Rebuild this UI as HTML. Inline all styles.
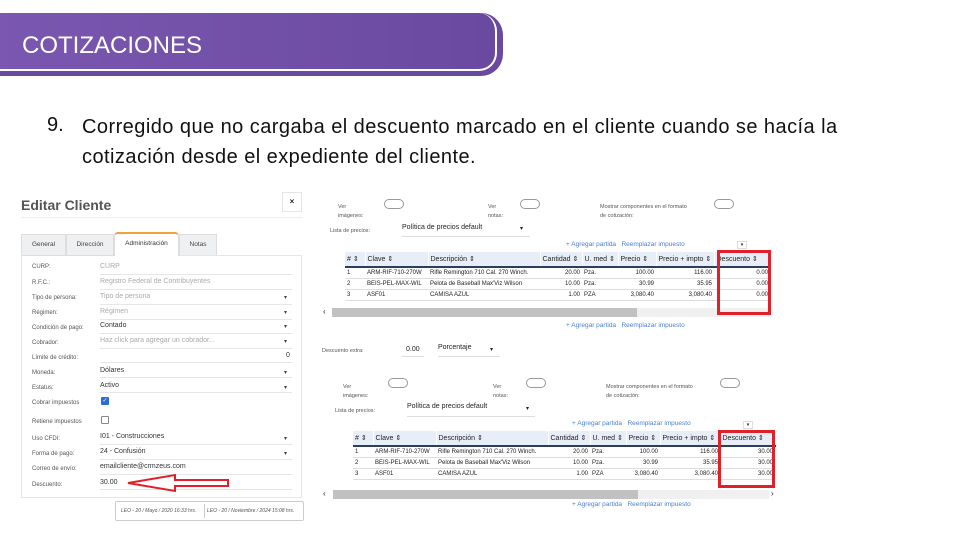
<!DOCTYPE html>
<html><head><meta charset="utf-8"><style>
*{margin:0;padding:0;box-sizing:border-box}
body{width:960px;height:540px;background:#fff;position:relative;overflow:hidden;font-family:"Liberation Sans",sans-serif;color:#222}
.a{position:absolute;white-space:nowrap}
.lbl{position:absolute;left:32px;font-size:6px;color:#555}
.val{position:absolute;left:100px;font-size:7px;color:#333}
.ph{color:#aaa}
.ln{position:absolute;left:100px;width:192px;height:1px;background:#e6e6e6}
.car{position:absolute;left:284px;font-size:6px;color:#444}
table{border-collapse:collapse;font-size:6px;position:absolute;table-layout:fixed;white-space:nowrap}
th{background:#e8eef7;font-weight:normal;text-align:left;padding:0 2px;height:15px;border-right:1px solid #fff;border-bottom:2px solid #2c3e60;color:#222;font-size:7px;overflow:hidden}
td{padding:0 2px;height:10.5px;border-bottom:1px solid #ddd;color:#222;overflow:hidden;line-height:10px}
td.r{text-align:right}
.red{position:absolute;border:3px solid #e0202a}
.tog{position:absolute;width:20px;height:10px;border:1px solid #999;border-radius:6px}
.sm{position:absolute;font-size:5.5px;color:#555;line-height:9px}
.blue{position:absolute;font-size:6.5px;color:#4a7fd0}
.sb{position:absolute;height:9px;background:#f0f0f0}
.sb div{height:100%;background:#c1c1c1}
</style></head><body>
<div class="a" style="left:0;top:13px;width:503px;height:63px;background:#6a4a9f;border-radius:0 22px 22px 0"></div>
<div class="a" style="left:-4px;top:13px;width:501px;height:58px;background:linear-gradient(90deg,#7a57b0,#6a4aa0);border:2px solid #fff;border-left:none;border-top:none;border-radius:0 18px 18px 0"></div>
<div class="a" style="left:22px;top:32px;font-size:24px;color:#fff">COTIZACIONES</div>
<div class="a" style="left:47px;top:114px;font-size:20px;color:#111">9.</div>
<div class="a" style="left:82px;top:112px;font-size:20px;color:#111;line-height:30px;letter-spacing:0.45px">Corregido que no cargaba el descuento marcado en el cliente cuando se hacía la<br>cotización desde el expediente del cliente.</div>
<div class="a" style="left:21px;top:197px;font-size:14px;font-weight:bold;color:#555">Editar Cliente</div>
<div class="a" style="left:282px;top:192px;width:20px;height:20px;border:1px solid #e6e6e6;font-size:8px;text-align:center;line-height:18px;font-weight:bold">×</div>
<div class="a" style="left:21px;top:217px;width:282px;height:1px;background:#eee"></div>
<div class="a" style="left:21px;top:234px;width:45px;height:22px;background:#eef0f1;border:1px solid #ddd;font-size:6.5px;text-align:center;line-height:20px;color:#444">General</div>
<div class="a" style="left:66px;top:234px;width:48px;height:22px;background:#eef0f1;border:1px solid #ddd;font-size:6.5px;text-align:center;line-height:20px;color:#444">Dirección</div>
<div class="a" style="left:114px;top:232px;width:65px;height:24px;background:#fff;border:1px solid #ddd;border-top:2px solid #f0a040;border-bottom:none;border-radius:4px 4px 0 0;font-size:6.5px;text-align:center;line-height:20px;color:#333">Administración</div>
<div class="a" style="left:179px;top:234px;width:38px;height:22px;background:#eef0f1;border:1px solid #ddd;font-size:6.5px;text-align:center;line-height:20px;color:#444">Notas</div>
<div class="a" style="left:21px;top:255px;width:281px;height:243px;border:1px solid #e6e6e6;border-top:none"></div>
<div class="a" style="left:179px;top:255px;width:123px;height:1px;background:#e6e6e6"></div>
<div class="lbl" style="top:264px">CURP:</div><div class="val ph" style="top:263px">CURP</div><div class="ln" style="top:274px"></div>
<div class="lbl" style="top:280px">R.F.C.:</div><div class="val ph" style="top:278px">Registro Federal de Contribuyentes</div><div class="ln" style="top:289px"></div>
<div class="lbl" style="top:295px">Tipo de persona:</div><div class="val ph" style="top:293px">Tipo de persona</div><div class="car" style="top:294px">▾</div><div class="ln" style="top:304px"></div>
<div class="lbl" style="top:310px">Régimen:</div><div class="val ph" style="top:308px">Régimen</div><div class="car" style="top:309px">▾</div><div class="ln" style="top:319px"></div>
<div class="lbl" style="top:325px">Condición de pago:</div><div class="val" style="top:322px">Contado</div><div class="car" style="top:323px">▾</div><div class="ln" style="top:333px"></div>
<div class="lbl" style="top:340px">Cobrador:</div><div class="val ph" style="top:337px">Haz click para agregar un cobrador...</div><div class="car" style="top:338px">▾</div><div class="ln" style="top:348px"></div>
<div class="lbl" style="top:355px">Límite de crédito:</div><div class="val" style="top:352px;left:286px">0</div><div class="ln" style="top:362px"></div>
<div class="lbl" style="top:370px">Moneda:</div><div class="val" style="top:367px">Dólares</div><div class="car" style="top:369px">▾</div><div class="ln" style="top:377px"></div>
<div class="lbl" style="top:385px">Estatus:</div><div class="val" style="top:382px">Activo</div><div class="car" style="top:384px">▾</div><div class="ln" style="top:392px"></div>
<div class="lbl" style="top:400px">Cobrar impuestos</div>
<div class="a" style="left:101px;top:397px;width:8px;height:8px;background:#2a6fd6;border-radius:1px;color:#fff;font-size:6px;line-height:8px;text-align:center">✓</div>
<div class="lbl" style="top:419px">Retiene impuestos</div>
<div class="a" style="left:101px;top:416px;width:8px;height:8px;border:1px solid #888;border-radius:1px"></div>
<div class="lbl" style="top:436px">Uso CFDI:</div><div class="val" style="top:433px">I01 - Construcciones</div><div class="car" style="top:435px">▾</div><div class="ln" style="top:444px"></div>
<div class="lbl" style="top:451px">Forma de pago:</div><div class="val" style="top:448px">24 - Confusión</div><div class="car" style="top:450px">▾</div><div class="ln" style="top:459px"></div>
<div class="lbl" style="top:466px">Correo de envío:</div><div class="val" style="top:463px">emailcliente@crmzeus.com</div><div class="ln" style="top:474px"></div>
<div class="lbl" style="top:482px">Descuento:</div><div class="val" style="top:479px">30.00</div><div class="ln" style="top:489px"></div>
<svg class="a" style="left:120px;top:473px" width="112" height="20"><path d="M8 10 L55 2 L55 7 L108 7 L108 13 L55 13 L55 18 Z" fill="none" stroke="#e0202a" stroke-width="2"/></svg>
<div class="a" style="left:115px;top:501px;width:189px;height:20px;border:1px solid #ccc;border-radius:2px;font-size:5px;font-style:italic;color:#555;line-height:18px"><span style="position:absolute;left:5px">LEO - 20 / Mayo / 2020 16:33 hrs.</span><span style="position:absolute;left:88px;top:2px;width:1px;height:14px;background:#ccc"></span><span style="position:absolute;left:91px">LEO - 20 / Noviembre / 2024 15:08 hrs.</span></div>
<div class="sm" style="left:338px;top:203px">Ver<br>imágenes:</div><div class="tog" style="left:384px;top:199px"></div>
<div class="sm" style="left:488px;top:203px">Ver<br>notas:</div><div class="tog" style="left:520px;top:199px"></div>
<div class="sm" style="left:600px;top:203px">Mostrar componentes en el formato<br>de cotización:</div><div class="tog" style="left:714px;top:199px"></div>
<div class="sm" style="left:330px;top:227px">Lista de precios:</div>
<div class="a" style="left:402px;top:224px;font-size:7px">Política de precios default</div><div class="a" style="left:520px;top:225px;font-size:6px">▾</div>
<div class="a" style="left:402px;top:236px;width:128px;height:1px;background:#ddd"></div>
<div class="blue" style="left:566px;top:241px">+ Agregar partida &nbsp; Reemplazar impuesto</div>
<div class="a" style="left:737px;top:241px;width:10px;height:8px;border:1px solid #ddd;font-size:5px;text-align:center">▾</div>
<table style="left:345px;top:252px;width:425px">
<colgroup><col style="width:20px"><col style="width:63px"><col style="width:112px"><col style="width:42px"><col style="width:36px"><col style="width:38px"><col style="width:58px"><col style="width:56px"></colgroup>
<tr><th># ⇕</th><th>Clave ⇕</th><th>Descripción ⇕</th><th>Cantidad ⇕</th><th>U. med ⇕</th><th>Precio ⇕</th><th>Precio + impto ⇕</th><th>Descuento ⇕</th></tr>
<tr><td>1</td><td>ARM-RIF-710-270W</td><td>Rifle Remington 710 Cal. 270 Winch.</td><td class="r">20.00</td><td>Pza.</td><td class="r">100.00</td><td class="r">116.00</td><td class="r">0.00</td></tr>
<tr><td>2</td><td>BEIS-PEL-MAX-WIL</td><td>Pelota de Baseball Max'Viz Wilson</td><td class="r">10.00</td><td>Pza.</td><td class="r">30.99</td><td class="r">35.95</td><td class="r">0.00</td></tr>
<tr><td>3</td><td>ASF01</td><td>CAMISA AZUL</td><td class="r">1.00</td><td>PZA</td><td class="r">3,080.40</td><td class="r">3,080.40</td><td class="r">0.00</td></tr>
</table>
<div class="a" style="left:323px;top:307px;font-size:8px">‹</div>
<div class="sb" style="left:332px;top:308px;width:438px"><div style="width:305px"></div></div>
<div class="red" style="left:717px;top:250px;width:54px;height:65px"></div>
<div class="blue" style="left:566px;top:322px">+ Agregar partida &nbsp; Reemplazar impuesto</div>
<div class="sm" style="left:322px;top:347px">Descuento extra:</div>
<div class="a" style="left:406px;top:346px;font-size:7px">0.00</div><div class="a" style="left:402px;top:356px;width:22px;height:1px;background:#ddd"></div>
<div class="a" style="left:438px;top:344px;font-size:7px">Porcentaje</div><div class="a" style="left:490px;top:346px;font-size:6px">▾</div>
<div class="a" style="left:438px;top:356px;width:62px;height:1px;background:#ddd"></div>
<div class="sm" style="left:343px;top:383px">Ver<br>imágenes:</div><div class="tog" style="left:388px;top:378px"></div>
<div class="sm" style="left:493px;top:383px">Ver<br>notas:</div><div class="tog" style="left:526px;top:378px"></div>
<div class="sm" style="left:606px;top:383px">Mostrar componentes en el formato<br>de cotización:</div><div class="tog" style="left:720px;top:378px"></div>
<div class="sm" style="left:335px;top:407px">Lista de precios:</div>
<div class="a" style="left:407px;top:403px;font-size:7px">Política de precios default</div><div class="a" style="left:526px;top:405px;font-size:6px">▾</div>
<div class="a" style="left:407px;top:416px;width:128px;height:1px;background:#ddd"></div>
<div class="blue" style="left:572px;top:420px">+ Agregar partida &nbsp; Reemplazar impuesto</div>
<div class="a" style="left:743px;top:421px;width:10px;height:8px;border:1px solid #ddd;font-size:5px;text-align:center">▾</div>
<table style="left:353px;top:431px;width:422px">
<colgroup><col style="width:20px"><col style="width:63px"><col style="width:112px"><col style="width:42px"><col style="width:36px"><col style="width:34px"><col style="width:60px"><col style="width:55px"></colgroup>
<tr><th># ⇕</th><th>Clave ⇕</th><th>Descripción ⇕</th><th>Cantidad ⇕</th><th>U. med ⇕</th><th>Precio ⇕</th><th>Precio + impto ⇕</th><th>Descuento ⇕</th></tr>
<tr><td>1</td><td>ARM-RIF-710-270W</td><td>Rifle Remington 710 Cal. 270 Winch.</td><td class="r">20.00</td><td>Pza.</td><td class="r">100.00</td><td class="r">116.00</td><td class="r">30.00</td></tr>
<tr><td>2</td><td>BEIS-PEL-MAX-WIL</td><td>Pelota de Baseball Max'Viz Wilson</td><td class="r">10.00</td><td>Pza.</td><td class="r">30.99</td><td class="r">35.95</td><td class="r">30.00</td></tr>
<tr><td>3</td><td>ASF01</td><td>CAMISA AZUL</td><td class="r">1.00</td><td>PZA</td><td class="r">3,080.40</td><td class="r">3,080.40</td><td class="r">30.00</td></tr>
</table>
<div class="a" style="left:323px;top:489px;font-size:8px">‹</div><div class="a" style="left:771px;top:489px;font-size:8px">›</div>
<div class="sb" style="left:333px;top:490px;width:436px"><div style="width:305px"></div></div>
<div class="red" style="left:718px;top:430px;width:57px;height:58px"></div>
<div class="blue" style="left:572px;top:501px">+ Agregar partida &nbsp; Reemplazar impuesto</div>
</body></html>
